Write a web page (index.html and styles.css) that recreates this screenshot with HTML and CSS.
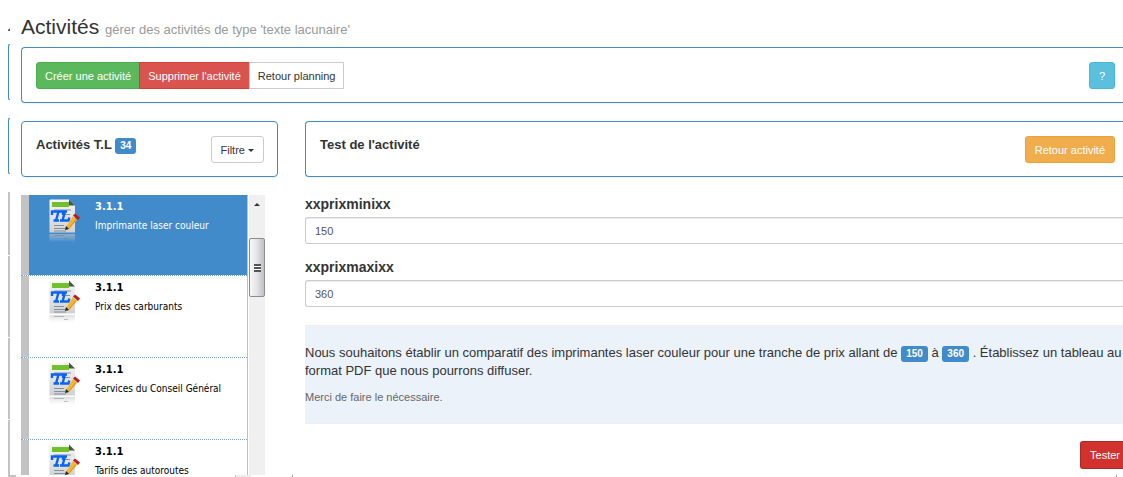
FILE: index.html
```
<!DOCTYPE html>
<html lang="fr">
<head>
    <meta charset="UTF-8">
    <meta name="viewport" content="width=device-width, initial-scale=1.0">
    <title>Activités</title>
    <link rel="stylesheet" href="styles.css">
</head>
<body>
    <svg width="0" height="0" class="sprite" aria-hidden="true">
        <defs>
            <linearGradient id="paper" x1="0" y1="0" x2="0" y2="1">
                <stop offset="0" stop-color="#f6f6f6"/>
                <stop offset="1" stop-color="#cfd1d3"/>
            </linearGradient>
            <linearGradient id="reflect" x1="0" y1="0" x2="0" y2="1">
                <stop offset="0" stop-color="#c4c6c8" stop-opacity=".6"/>
                <stop offset="1" stop-color="#e0e0e0" stop-opacity="0"/>
            </linearGradient>
            <symbol id="doc" viewBox="0 0 32 44">
                <path d="M1.500 1.500q0-1 1-1H21l6 6v27H1.500z" fill="url(#paper)"/>
                <path d="M4 3h17v5H4z" fill="#72c02c"/>
                <path d="M21 .5l6 6h-6z" fill="#4d5355"/>
                <path d="M6 11h17M15 15.500h7M6 26.500h10M6 29.500h11M6 32h12" stroke="#84919c" fill="none"/>
                <path d="M4 16v-3.500h11V16M10.500 12.500L8 21.500M5.500 21.500h5.500M14 12.500h5M17 12.500l-2.500 9M12 21.500h8.500l.8-3" stroke="#0b63f6" stroke-width="2.400" fill="none"/>
                <path d="M18 28l7-11 4 4-8 9-4 1z" fill="#f6b530"/>
                <path d="M21 29.500l7-9" stroke="#d88c16" fill="none"/>
                <path d="M25 16.500l2-2 5 4-2 2.500z" fill="#b71c24"/>
                <path d="M17 31l1-4 3 3z" fill="#222"/>
                <path d="M1.500 35H27v8H1.500z" fill="url(#reflect)"/>
                <path d="M6 36.500h10M16 39.500h4" stroke="#697580" stroke-opacity=".4" fill="none"/>
            </symbol>
        </defs>
    </svg>

    <!-- previous screen, only its left edge shows -->
    <div class="under" aria-hidden="true">
        <span class="under-title"></span>
        <span class="under-panel"></span>
        <span class="under-panel"></span>
        <div class="under-list"><i></i><i></i><i></i><i></i></div>
    </div>

    <main class="page">
        <h1>Activités <small>gérer des activités de type 'texte lacunaire'</small></h1>

        <div class="panel open toolbar">
            <div class="btn-group">
                <button type="button" class="btn success">Créer une activité</button>
                <button type="button" class="btn danger">Supprimer l'activité</button>
                <button type="button" class="btn default">Retour planning</button>
            </div>
            <button type="button" class="btn info">?</button>
        </div>

        <div class="columns">
            <section class="side">
                <div class="panel">
                    <h2>Activités T.L <span class="badge">34</span></h2>
                    <button type="button" class="btn default">Filtre <span class="caret"></span></button>
                </div>
                <div class="list-box">
                    <ul class="list">
                        <li class="active">
                            <svg class="icon"><use href="#doc"/></svg>
                            <div><strong>3.1.1</strong><p>Imprimante laser couleur</p></div>
                        </li>
                        <li>
                            <svg class="icon"><use href="#doc"/></svg>
                            <div><strong>3.1.1</strong><p>Prix des carburants</p></div>
                        </li>
                        <li>
                            <svg class="icon"><use href="#doc"/></svg>
                            <div><strong>3.1.1</strong><p>Services du Conseil Général</p></div>
                        </li>
                        <li>
                            <svg class="icon"><use href="#doc"/></svg>
                            <div><strong>3.1.1</strong><p>Tarifs des autoroutes</p></div>
                        </li>
                    </ul>
                    <div class="scrollbar" aria-hidden="true">
                        <span class="arrow"></span>
                        <span class="thumb"><i></i></span>
                    </div>
                </div>
            </section>

            <section class="content">
                <div class="panel open">
                    <h2>Test de l'activité</h2>
                    <button type="button" class="btn warning">Retour activité</button>
                </div>
                <form>
                    <label for="prixmini">xxprixminixx</label>
                    <input type="text" id="prixmini" value="150">
                    <label for="prixmaxi">xxprixmaxixx</label>
                    <input type="text" id="prixmaxi" value="360">
                    <div class="preview">
                        <p>Nous souhaitons établir un comparatif des imprimantes laser couleur pour une tranche de prix allant de <span class="badge">150</span> à <span class="badge">360</span> . Établissez un tableau au<br>format PDF que nous pourrons diffuser.</p>
                        <small>Merci de faire le nécessaire.</small>
                    </div>
                    <button type="button" class="btn test">Tester</button>
                </form>
            </section>
        </div>

        <div class="under-foot" aria-hidden="true"><i></i><b></b><b></b></div>
    </main>
</body>
</html>
```

FILE: styles.css
```
* {
    box-sizing: border-box;
}
body {
    margin: 0;
    padding-left: 8px;
    display: flex;
    align-items: flex-start;
    background: #fff;
    color: #333;
    font: 13px/18px "Liberation Sans", Arial, sans-serif;
    overflow: hidden;
}
.sprite {
    position: absolute;
}
h1, h2, p, ul {
    margin: 0;
    padding: 0;
}

/* edge of the previous screen */
.under {
    width: 8px;
    padding-top: 27px;
    flex: none;
}
.under span {
    display: block;
    width: 2px;
}
.under-title {
    height: 4px;
    background: linear-gradient(135deg, #fff 45%, #555 55%);
}
.under-panel {
    height: 56px;
    margin-top: 13px;
    border: 1px solid #428bca;
    border-right: 0;
    border-radius: 4px 0 0 4px;
}
.under-panel + .under-panel {
    margin-top: 18px;
}
.under-list {
    margin-top: 18px;
    border-bottom: 2px solid #c3c3c3;
}
.under-list i {
    display: block;
    width: 2px;
    height: 81px;
    margin-bottom: 1px;
    background: #c3c3c3;
}
.under-list i:first-child {
    height: 63px;
}
.under-list i:last-child {
    height: 55px;
    margin-bottom: 0;
}
.under-foot {
    display: flex;
    height: 2px;
    padding: 0 6px 0 214px;
}
.under-foot i {
    width: 16px;
    margin-right: 41px;
    border-left: 1px solid #a9c4de;
    background: #ededed;
}
.under-foot b {
    width: 1px;
    background: #999;
}
.under-foot b:last-child {
    margin-left: auto;
}

.page {
    flex: 1;
    min-width: 0;
    padding: 15px 0 0 5px;
}
h1 {
    margin-bottom: 8px;
    font-size: 21px;
    line-height: 24px;
    height: 24px;
    font-weight: normal;
    white-space: nowrap;
}
h1 small {
    font-size: 13px;
    line-height: 18px;
    color: #999;
}
h2 {
    font-size: 13px;
    line-height: 18px;
}

.panel {
    display: flex;
    justify-content: space-between;
    align-items: flex-start;
    height: 56px;
    padding: 14px 13px 0 14px;
    border: 1px solid #428bca;
    border-radius: 4px;
    box-shadow: 0 1px 1px rgba(0,0,0,0.05);
}
.panel.open {
    padding-right: 8px;
    border-right: 0;
    border-radius: 4px 0 0 4px;
}
.toolbar {
    margin-bottom: 18px;
}
.btn {
    height: 27px;
    padding: 0 9px;
    border: 1px solid;
    border-radius: 3px;
    color: #fff;
    font: 11px/16px "Liberation Sans", Arial, sans-serif;
    white-space: nowrap;
    cursor: pointer;
}
.btn-group {
    display: flex;
}
.btn-group .btn {
    margin-right: -1px;
    padding: 0 8px;
    border-radius: 0;
}
.btn-group .btn:first-child {
    border-radius: 3px 0 0 3px;
}
.success { background: #5cb85c; border-color: #4cae4c; }
.danger { background: #d9534f; border-color: #d43f3a; }
.info { background: #5bc0de; border-color: #46b8da; }
.warning { background: #f0ad4e; border-color: #eea236; }
.default { background: #fff; border-color: #ccc; color: #333; }
.test {
    display: block;
    height: 28px;
    margin: 17px 0 0 auto;
    padding-right: 3px;
    background: #d2322d;
    border-color: #ac2925;
    border-right: 0;
    border-radius: 3px 0 0 3px;
}
.caret {
    display: inline-block;
    border: 3px solid transparent;
    border-top-color: #333;
    border-bottom: 0;
    vertical-align: middle;
}
.badge {
    display: inline-block;
    padding: 0 5px;
    border-radius: 3px;
    background: #428bca;
    color: #fff;
    font-size: 10px;
    line-height: 16px;
    font-weight: bold;
}

.columns {
    display: grid;
    grid-template-columns: 257px minmax(0, 1fr);
    gap: 27px;
}

/* list of activities */
.list-box {
    display: flex;
    width: 244px;
    height: 280px;
    margin-top: 18px;
    overflow: hidden;
}
.list {
    flex: 1;
    list-style: none;
    border-right: 1px solid #a9c4de;
    color: #000;
    font: 10px/14px "DejaVu Sans Condensed", "DejaVu Sans", sans-serif;
}
.list li {
    display: flex;
    height: 82px;
    padding: 4px 0 0 27px;
    border-bottom: 1px dotted #7aa7d0;
    background: linear-gradient(90deg, #c3c3c3 8px, #fff 8px) padding-box;
}
.list li.active {
    height: 81px;
    background: linear-gradient(90deg, #c3c3c3 8px, #428bca 8px) padding-box;
    color: #fff;
}
.list li div {
    padding-top: 1px;
}
.list strong {
    display: block;
    font-family: "DejaVu Sans", sans-serif;
}
.list p {
    margin-top: 5px;
}
.icon {
    flex: none;
    width: 32px;
    height: 44px;
    margin-right: 15px;
}
.scrollbar {
    width: 16px;
    margin-left: 1px;
    padding-top: 8px;
    background: #f0f0f0;
}
.arrow {
    display: block;
    width: 6px;
    margin: 0 auto;
    border: 3px solid transparent;
    border-top: 0;
    border-bottom-color: #333;
}
.thumb {
    display: flex;
    align-items: center;
    justify-content: center;
    height: 59px;
    margin-top: 32px;
    border: 1px solid #8c8c8c;
    border-radius: 2px;
    background: linear-gradient(90deg, #f7f7f7, #e3e3e5 50%, #c0c0c4);
}
.thumb i {
    width: 7px;
    height: 8px;
    background: repeating-linear-gradient(#555 0 2px, #fff 2px 3px);
}

/* test form */
.content label {
    display: block;
    margin: 18px 0 4px;
    font-size: 14px;
    font-weight: bold;
}
.content input + label {
    margin-top: 14px;
}
.content input {
    display: block;
    width: 100%;
    height: 27px;
    padding: 0 9px;
    border: 1px solid #ccc;
    border-right: 0;
    border-radius: 3px 0 0 3px;
    box-shadow: inset 0 1px 1px rgba(0,0,0,0.08);
    color: #555;
    font: 11px/16px "Liberation Sans", Arial, sans-serif;
}
.preview {
    height: 99px;
    margin-top: 18px;
    padding-top: 18px;
    border: solid #eee;
    border-width: 1px 0;
    background: #ebf2fa;
    white-space: nowrap;
    overflow: hidden;
}
.preview small {
    display: block;
    margin-top: 8px;
    font-size: 11px;
    color: #666;
}
```
